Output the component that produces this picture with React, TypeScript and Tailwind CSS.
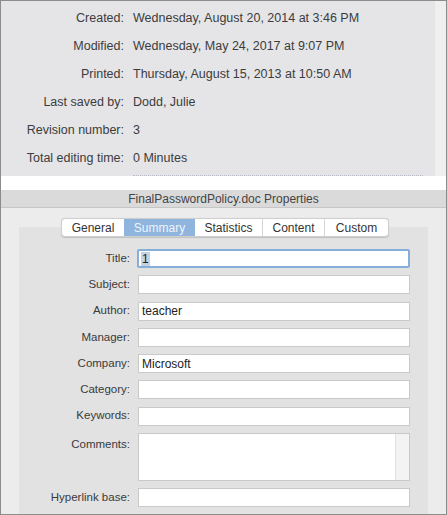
import React from "react";

const topRows: [string, string][] = [
  ["Created:", "Wednesday, August 20, 2014 at 3:46 PM"],
  ["Modified:", "Wednesday, May 24, 2017 at 9:07 PM"],
  ["Printed:", "Thursday, August 15, 2013 at 10:50 AM"],
  ["Last saved by:", "Dodd, Julie"],
  ["Revision number:", "3"],
  ["Total editing time:", "0 Minutes"],
];

const tabs = ["General", "Summary", "Statistics", "Content", "Custom"];
const tabW = [62, 71, 68, 62, 63];

const fields: { label: string; value?: string; kind?: "focus" | "area" }[] = [
  { label: "Title:", value: "1", kind: "focus" },
  { label: "Subject:" },
  { label: "Author:", value: "teacher" },
  { label: "Manager:" },
  { label: "Company:", value: "Microsoft" },
  { label: "Category:" },
  { label: "Keywords:" },
  { label: "Comments:", kind: "area" },
  { label: "Hyperlink base:" },
];

export default function App() {
  const font = { fontFamily: '"Liberation Sans", Arial, sans-serif' };
  return (
    <div
      className="w-[447px] h-[515px] overflow-hidden border border-[#8c8c8c] bg-[#ececec] flex flex-col text-[#3c3c3c]"
      style={font}
    >
      {/* Top info panel */}
      <div className="h-[175px] flex shrink-0">
        <div className="w-[434px] bg-[#e5e5e7] flex flex-col pt-[3px]">
          {topRows.map(([l, v]) => (
            <div key={l} className="h-[28px] flex items-center text-[12.5px]">
              <div className="w-[123px] text-right">{l}</div>
              <div className="ml-[9px]">{v}</div>
            </div>
          ))}
          <div className="mt-auto ml-[132px] w-[290px] border-b border-dotted border-[#b7bcc6]" />
        </div>
        <div className="flex-1 bg-[#efeff0]" />
      </div>

      {/* white band */}
      <div className="h-[14px] bg-white shrink-0" />

      {/* title bar */}
      <div className="h-[18px] shrink-0 bg-[#dadada] border-b border-[#c6c6c6] flex items-center justify-center text-[12px] text-[#444]">
        FinalPasswordPolicy.doc Properties
      </div>

      {/* body */}
      <div className="flex-1 flex flex-col pt-[10px]">
        <div className="relative z-10 self-start ml-[60px] flex h-[19px] rounded-[4px] border border-[#cfcfcf] bg-white overflow-hidden shadow-[0_0.5px_1px_rgba(0,0,0,0.15)]">
          {tabs.map((t, i) => (
            <div
              key={t}
              style={{ width: tabW[i] }}
              className={
                t === "Summary"
                  ? "flex items-center justify-center text-[12px] bg-[#8fb5de] text-[#eef4fb]"
                  : i < tabs.length - 1 && tabs[i + 1] !== "Summary"
                  ? "flex items-center justify-center text-[12px] border-r border-[#d6d6d6] text-[#333]"
                  : "flex items-center justify-center text-[12px] text-[#333]"
              }
            >
              {t}
            </div>
          ))}
        </div>
        <div className="-mt-[10px] ml-[18px] w-[409px] flex-1 bg-[#e2e2e2] pt-[22px] flex flex-col gap-[7.25px]">
          {fields.map((f) => (
            <div
              key={f.label}
              className={f.kind === "area" ? "flex items-start" : "flex items-center"}
            >
              <div
                className={
                  f.kind === "area"
                    ? "w-[111px] text-right text-[11.5px] pt-[3px] text-[#3a3a3a]"
                    : "w-[111px] text-right text-[11.5px] text-[#3a3a3a]"
                }
              >
                {f.label}
              </div>
              {f.kind === "area" ? (
                <div className="ml-[8px] w-[272px] h-[48px] bg-white border border-[#c9c9c9] flex">
                  <div className="flex-1" />
                  <div className="w-[14px] bg-[#f3f3f3] border-l border-[#e2e2e2]" />
                </div>
              ) : f.kind === "focus" ? (
                <div className="ml-[7px] w-[273px] h-[19px] bg-white border-[2px] border-[#86aedb] rounded-[2px] flex items-center pl-[2px] text-[12px] text-[#222]">
                  <span className="bg-[#c4d2e2] px-[1px] leading-[14px]">{f.value}</span>
                </div>
              ) : (
                <div className="ml-[8px] w-[272px] h-[19px] bg-white border border-[#c9c9c9] flex items-center pl-[3px] text-[12px] text-[#222]">
                  {f.value}
                </div>
              )}
            </div>
          ))}
        </div>
      </div>
    </div>
  );
}
